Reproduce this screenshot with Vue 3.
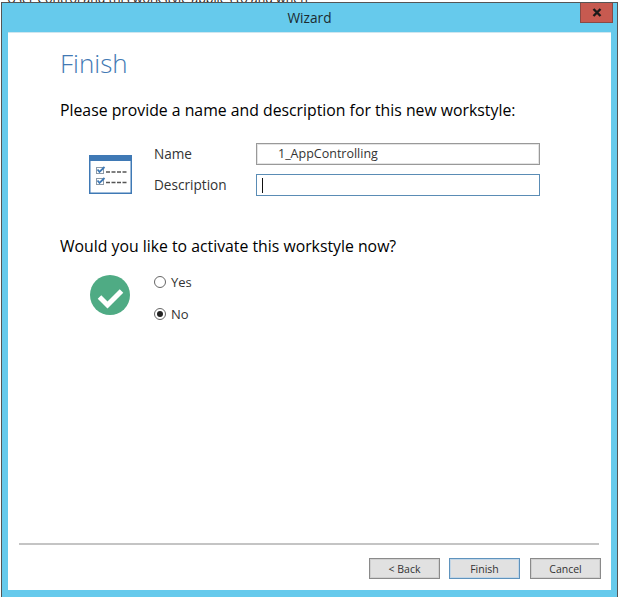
<template>
  <div class="page">
    <div class="behind">User Control and this workstyle applies to and when</div>
    <div class="window">
      <div class="titlebar">
        <span class="titlebar__text">Wizard</span>
        <button class="close" type="button">
          <svg width="10" height="9" viewBox="0 0 10 9">
            <path d="M1.5 1 L8.5 8 M8.5 1 L1.5 8" stroke="#1a1a1a" stroke-width="2.4" fill="none" />
          </svg>
        </button>
      </div>
      <div class="content">
        <h1 class="heading">Finish</h1>
        <p class="prompt prompt--first">Please provide a name and description for this new workstyle:</p>

        <div class="section section--name">
          <svg class="section__icon" width="43" height="39" viewBox="0 0 43 39">
            <rect x="0.75" y="0.75" width="41.5" height="37.5" fill="#fff" stroke="#3f79b5" stroke-width="1.5" />
            <rect x="0" y="0" width="43" height="6" fill="#3f79b5" />
            <rect x="7.5" y="12.5" width="7" height="6" fill="#fff" stroke="#8c99a6" />
            <path d="M8.5 14.5 L10.5 17 L15.5 12" stroke="#3f79b5" stroke-width="1.8" fill="none" />
            <path d="M17 17 H38" stroke="#555" stroke-width="1.5" stroke-dasharray="4 1.5" />
            <rect x="7.5" y="23.5" width="7" height="6" fill="#fff" stroke="#8c99a6" />
            <path d="M8.5 25.5 L10.5 28 L15.5 23" stroke="#3f79b5" stroke-width="1.8" fill="none" />
            <path d="M17 27.5 H38" stroke="#555" stroke-width="1.5" stroke-dasharray="4 1.5" />
          </svg>
          <div class="fields">
            <label class="fields__label">Name</label>
            <div class="input">1_AppControlling</div>
            <label class="fields__label">Description</label>
            <div class="input input--focus"><span class="caret"></span></div>
          </div>
        </div>

        <p class="prompt prompt--second">Would you like to activate this workstyle now?</p>

        <div class="section section--activate">
          <svg class="section__icon" width="40" height="40" viewBox="0 0 40 40">
            <circle cx="20" cy="20" r="20" fill="#4fab84" />
            <path d="M9.5 22 L17.5 30 L31.5 16" stroke="#fff" stroke-width="5" fill="none" />
          </svg>
          <div class="radios">
            <div class="radio"><span class="radio__mark"></span>Yes</div>
            <div class="radio"><span class="radio__mark radio__mark--on"></span>No</div>
          </div>
        </div>

        <div class="footer">
          <div class="footer__line"></div>
          <div class="footer__buttons">
            <button class="btn" type="button">&lt; Back</button>
            <button class="btn btn--default" type="button">Finish</button>
            <button class="btn" type="button">Cancel</button>
          </div>
        </div>
      </div>
    </div>
  </div>
</template>

<script setup>
</script>

<style>
  html, body {
    margin: 0;
    background: #fff;
  }
</style>

<style scoped>
  .page {
    width: 620px;
    height: 597px;
    overflow: hidden;
    position: relative;
    box-sizing: border-box;
    padding: 2px 2px 0 1px;
    font-family: "Open Sans", "Noto Sans", sans-serif;
    color: #222;
  }

  .behind {
    position: absolute;
    top: -10px;
    left: 7px;
    font-size: 12.4px;
    color: #222;
  }

  .window {
    position: relative;
    height: 595px;
    box-sizing: border-box;
    display: flex;
    flex-direction: column;
    background: #66caec;
    border: 1px solid #555;
    border-bottom: none;
    padding: 0 6px 7px 6px;
  }

  .titlebar {
    height: 29px;
    flex: none;
    position: relative;
    display: flex;
    align-items: center;
    justify-content: center;
  }

  .titlebar__text {
    font-size: 13.7px;
    color: #1c2a30;
  }

  .close {
    position: absolute;
    top: 0;
    right: -2px;
    width: 33px;
    height: 20px;
    padding: 0;
    box-sizing: border-box;
    background: #c75a50;
    border: 1px solid #8a4a45;
    border-top: none;
    display: flex;
    align-items: center;
    justify-content: center;
  }

  .content {
    flex: 1;
    background: #fff;
    display: flex;
    flex-direction: column;
    padding: 0 10px 0 11px;
    border-top: 1px solid #cfe6ef;
  }

  .heading {
    margin: 12px 0 0 41px;
    font-size: 26px;
    line-height: 36px;
    font-weight: 300;
    color: #4279b4;
  }

  .prompt {
    margin: 0 0 0 41px;
    font-size: 15.8px;
    line-height: 20px;
    color: #000;
  }

  .prompt--first { margin-top: 19px; }
  .prompt--second { margin-top: 40px; }

  .section {
    display: flex;
  }

  .section--name {
    margin-top: 23px;
    padding-left: 70px;
  }

  .section--name .section__icon {
    margin-top: 12px;
  }

  .fields {
    margin-left: 22px;
    display: grid;
    grid-template-columns: 102px 284px;
    row-gap: 9px;
    align-items: center;
  }

  .fields__label {
    font-size: 13.6px;
    line-height: 18px;
    color: #333;
  }

  .input {
    height: 22px;
    box-sizing: border-box;
    border: 1px solid #999;
    box-shadow: inset 0 0 0 1px #e4e4e4;
    font-size: 12.5px;
    line-height: 20px;
    padding-left: 21px;
    color: #333;
  }

  .input--focus {
    border-color: #5a8cb5;
    box-shadow: none;
    padding-left: 5px;
    display: flex;
    align-items: center;
  }

  .caret {
    width: 1px;
    height: 15px;
    background: #111;
  }

  .section--activate {
    margin-top: 18px;
    padding-left: 71px;
  }

  .section--activate .section__icon {
    margin-top: 1px;
  }

  .radios {
    margin-left: 24px;
    margin-top: -1px;
    display: flex;
    flex-direction: column;
    gap: 14px;
  }

  .radio {
    display: flex;
    align-items: center;
    gap: 5px;
    font-size: 13px;
    line-height: 18px;
    color: #333;
  }

  .radio__mark {
    width: 12px;
    height: 12px;
    box-sizing: border-box;
    border: 1px solid #666;
    border-radius: 50%;
    background: #fff;
    position: relative;
  }

  .radio__mark--on::after {
    content: "";
    position: absolute;
    inset: 2px;
    border-radius: 50%;
    background: #222;
  }

  .footer {
    margin-top: auto;
    margin-bottom: 11px;
  }

  .footer__line {
    height: 2px;
    background: #c4c4c4;
    margin-right: 2px;
  }

  .footer__buttons {
    display: flex;
    justify-content: flex-end;
    gap: 9px;
    padding-top: 13px;
  }

  .btn {
    width: 71px;
    height: 21px;
    box-sizing: border-box;
    padding: 0;
    background: #e1e1e1;
    border: 1px solid #8a8a8a;
    box-shadow: inset 0 0 0 1px #d0d0d0;
    font-family: inherit;
    font-size: 10.5px;
    color: #333;
  }

  .btn--default {
    border-color: #5f93bd;
    box-shadow: inset 0 0 0 1px #c3d6e6;
    margin-right: 1px;
  }
</style>
